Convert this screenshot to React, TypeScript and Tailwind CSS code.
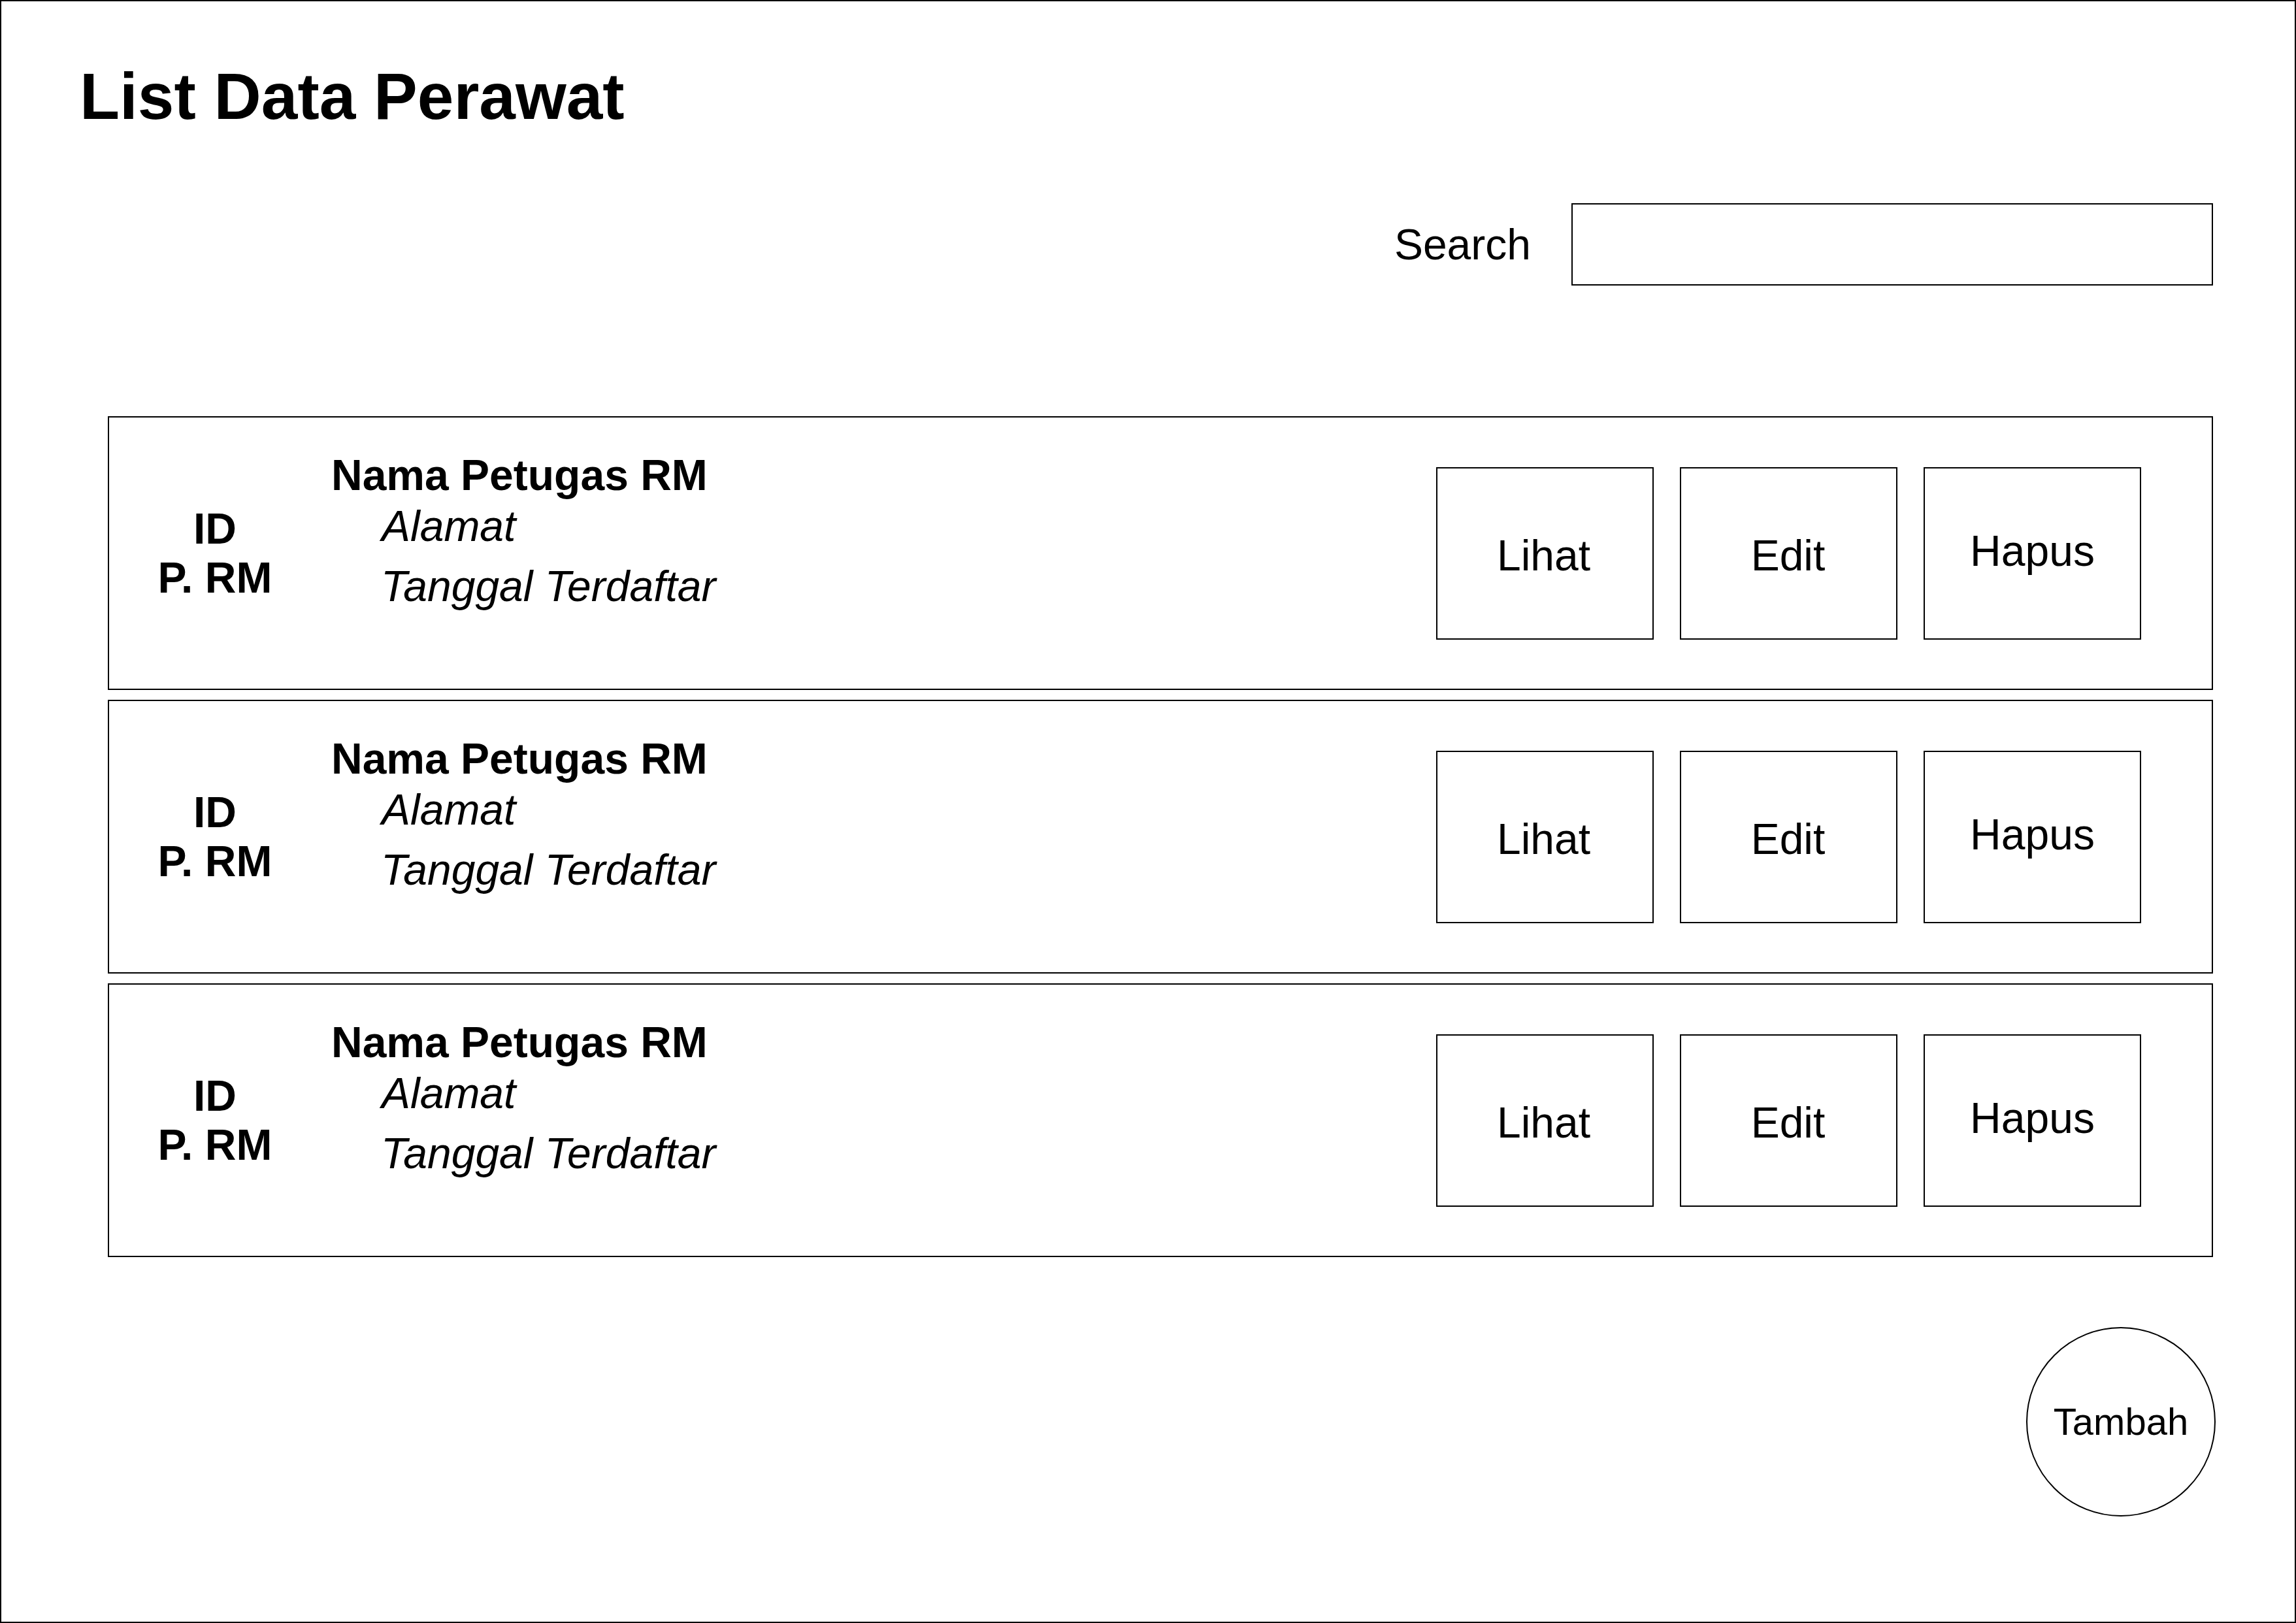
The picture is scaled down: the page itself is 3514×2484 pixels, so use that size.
import React from 'react';

type Perawat = {
  id: number;
};

const rows: Perawat[] = [{ id: 1 }, { id: 2 }, { id: 3 }];

const ActionButton: React.FC<{ label: string; shift: string }> = ({ label, shift }) => (
  <button
    className={`w-[333px] h-[264px] border-2 border-black bg-white flex items-center justify-center text-[66px] leading-[76px] text-black ${shift}`}
  >
    {label}
  </button>
);

const PerawatCard: React.FC = () => (
  <div className="h-[419px] border-2 border-black bg-white flex items-start">
    {/* kolom id */}
    <div className="w-[324px] self-center text-center font-bold text-[66px] leading-[75px]">
      <div>ID</div>
      <div>P. RM</div>
    </div>

    {/* info petugas */}
    <div className="ml-[16px] mt-[49px] text-[66px] leading-[78px]">
      <div className="font-bold">Nama Petugas RM</div>
      <div className="pl-[77px] italic">Alamat</div>
      <div className="pl-[76px] mt-[14px] italic">Tanggal Terdaftar</div>
    </div>

    <div className="ml-auto mr-[108px] self-center flex gap-[40px]">
      <ActionButton label="Lihat" shift="pt-[6px] pr-[4px]" />
      <ActionButton label="Edit" shift="pt-[6px] pr-[2px]" />
      <ActionButton label="Hapus" shift="pb-[8px]" />
    </div>
  </div>
);

export default function App() {
  return (
    <div
      className="w-[3514px] h-[2484px] border-2 border-black bg-white text-black flex flex-col"
      style={{ fontFamily: '"Liberation Sans", Arial, sans-serif' }}
    >
      <h1 className="ml-[120px] mt-[95px] text-[100px] leading-none font-bold">List Data Perawat</h1>

      <div className="mt-[114px] pr-[125px] flex justify-end items-center gap-[62px]">
        <span className="text-[66px] leading-[76px]">Search</span>
        <div className="w-[982px] h-[126px] border-2 border-black bg-white" />
      </div>

      <div className="mt-[200px] pl-[163px] pr-[125px] flex flex-col gap-[15px]">
        {rows.map((r) => (
          <PerawatCard key={r.id} />
        ))}
      </div>

      <div className="mt-[107px] pr-[121px] flex justify-end">
        <button className="w-[290px] h-[290px] rounded-full border-2 border-black bg-white flex items-center justify-center text-[58px] leading-[66px]">
          Tambah
        </button>
      </div>
    </div>
  );
}
